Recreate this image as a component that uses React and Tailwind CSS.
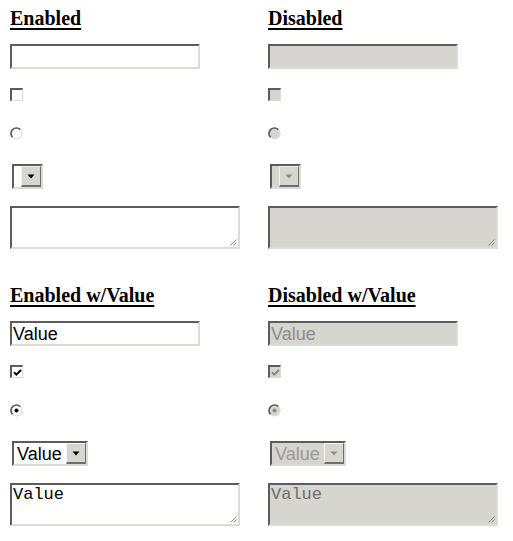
import React from "react";

const DARK = "border-t-[#5c5c5c] border-l-[#5c5c5c]";
const LIGHT = "border-b-[#dddbd5] border-r-[#dddbd5]";

function Heading({ children }) {
  return (
    <h2 className="text-[20px] leading-[23px] font-bold underline underline-offset-[3px] decoration-[1.5px] text-black font-['Liberation_Serif',serif]">
      {children}
    </h2>
  );
}

function TextBox({ disabled, value }) {
  return (
    <div
      className={`mt-[14px] w-[190px] h-[25px] border-2 ${DARK} ${LIGHT} flex items-center pl-[1px] text-[18px] leading-none font-['Liberation_Sans',Arial,sans-serif] ${
        disabled ? "bg-[#d6d5cf] text-[#8e8e8e]" : "bg-white text-black"
      }`}
    >
      {value}
    </div>
  );
}

function Checkbox({ disabled, checked }) {
  return (
    <div
      className={`mt-[19px] w-[13px] h-[13px] border-t-2 border-l-2 border-b border-r ${DARK} ${LIGHT} flex items-center justify-center ${
        disabled ? "bg-[#d6d5cf]" : "bg-white"
      }`}
    >
      {checked && (
        <svg width="9" height="9" viewBox="0 0 9 9">
          <path
            d="M1 4.2 L3.4 6.6 L8 2"
            fill="none"
            stroke={disabled ? "#8a8a8a" : "#000"}
            strokeWidth="2"
          />
        </svg>
      )}
    </div>
  );
}

function Radio({ disabled, checked }) {
  return (
    <div className="mt-[26px] w-[13px] h-[13px]">
      <svg width="13" height="13" viewBox="0 0 13 13">
        <circle cx="6.5" cy="6.5" r="5.5" fill={disabled ? "#d6d5cf" : "#fff"} />
        <path d="M10.4 2.6 A5.5 5.5 0 0 0 2.6 10.4" fill="none" stroke="#5c5c5c" strokeWidth="1.7" />
        <path d="M10.4 2.6 A5.5 5.5 0 0 1 2.6 10.4" fill="none" stroke="#dddbd5" strokeWidth="1.2" />
        {checked && <circle cx="6.5" cy="6.5" r="2" fill={disabled ? "#8a8a8a" : "#000"} />}
      </svg>
    </div>
  );
}

function Select({ disabled, value }) {
  return (
    <div
      className={`mt-[24px] ml-[2px] h-[25px] border-2 ${DARK} ${LIGHT} flex items-stretch self-start ${
        disabled ? "bg-[#d6d5cf]" : "bg-white"
      }`}
    >
      <div
        className={`flex items-center text-[18px] leading-none font-['Liberation_Sans',Arial,sans-serif] ${
          value ? "pl-[3px] pr-[4px]" : "w-[7px]"
        } ${disabled ? "text-[#9a9a9a]" : "text-black"}`}
      >
        {value}
      </div>
      <div className="w-[20px] bg-[#d6d5cf] border-t border-l border-b-2 border-r border-t-[#f4f4f2] border-l-[#f4f4f2] border-b-[#6e6e6e] border-r-[#6e6e6e] flex items-center justify-center">
        <svg width="8" height="5" viewBox="0 0 8 5">
          <path d="M0.5 0.5 L7.5 0.5 L4 4.5 Z" fill={disabled ? "#8e8e8e" : "#000"} />
        </svg>
      </div>
    </div>
  );
}

function TextArea({ disabled, value }) {
  return (
    <div
      className={`relative mt-[17px] w-[230px] h-[43px] border-2 ${DARK} ${LIGHT} pl-[1px] pt-[1px] text-[17px] leading-[18px] font-['Liberation_Mono','Courier_New',monospace] ${
        disabled ? "bg-[#d6d5cf] text-[#6e6e6e]" : "bg-white text-black"
      }`}
    >
      {value}
      <svg className="absolute right-[1px] bottom-[1px]" width="8" height="8" viewBox="0 0 8 8">
        <path d="M7.5 1.5 L1.5 7.5 M7.5 4.5 L4.5 7.5" stroke="#8c8c8c" strokeWidth="1" />
      </svg>
    </div>
  );
}

function Column({ title, disabled, withValue }) {
  const v = withValue ? "Value" : "";
  return (
    <div className="flex flex-col">
      <Heading>{title}</Heading>
      <TextBox disabled={disabled} value={v} />
      <Checkbox disabled={disabled} checked={withValue} />
      <Radio disabled={disabled} checked={withValue} />
      <Select disabled={disabled} value={v} />
      <TextArea disabled={disabled} value={v} />
    </div>
  );
}

export default function App() {
  return (
    <div className="w-[513px] h-[541px] bg-white pl-[10px] pt-[7px]">
      <div className="grid grid-cols-[258px_245px] gap-y-[35px]">
        <Column title="Enabled" />
        <Column title="Disabled" disabled />
        <Column title="Enabled w/Value" withValue />
        <Column title="Disabled w/Value" disabled withValue />
      </div>
    </div>
  );
}
